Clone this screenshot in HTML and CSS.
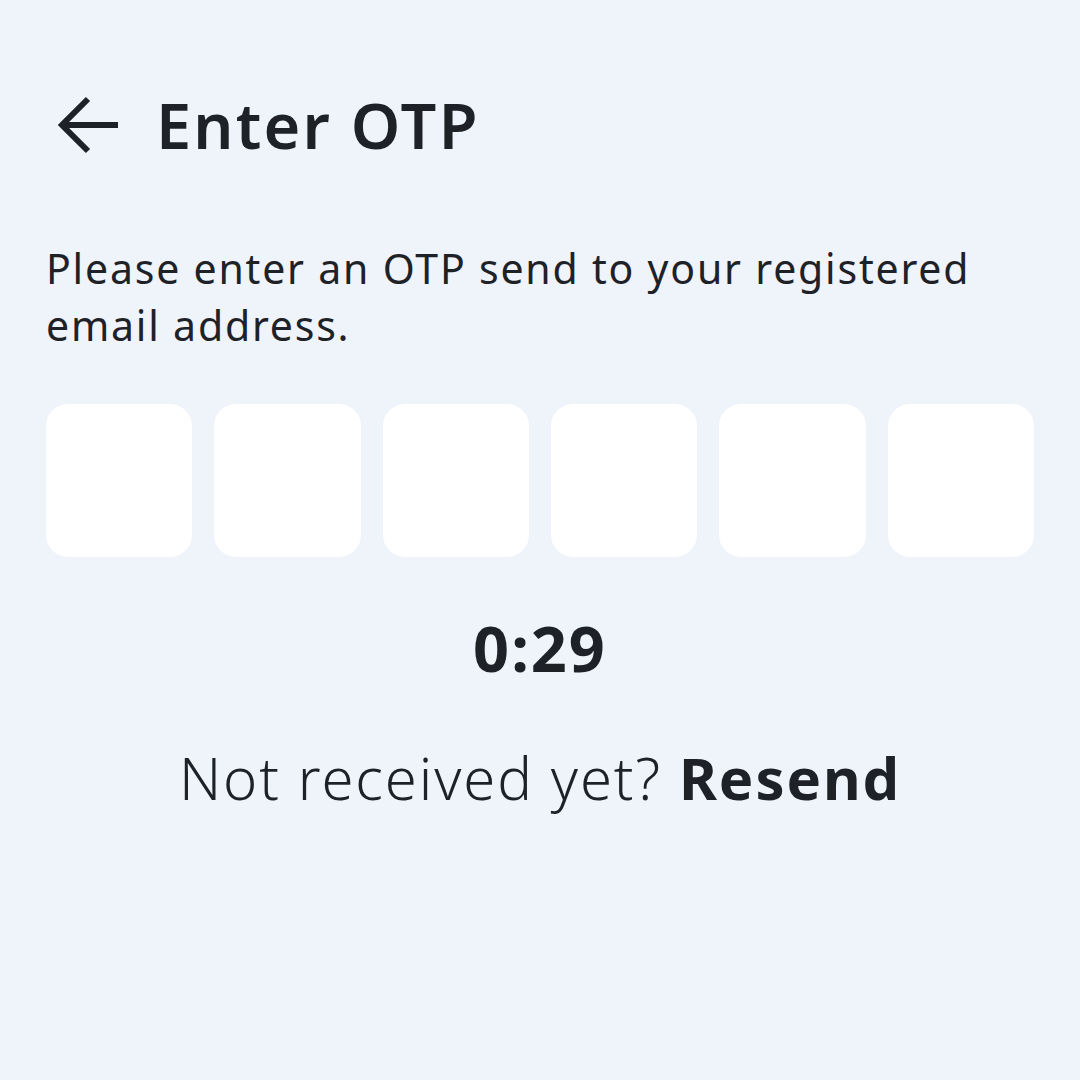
FILE: index.html
```html
<!DOCTYPE html>
<html lang="en">
<head>
<meta charset="utf-8">
<title>Enter OTP</title>
<link rel="stylesheet" href="styles.css">
</head>
<body>
<div class="page">
  <header class="header">
    <svg class="back" width="60" height="60" viewBox="0 0 60 60" aria-hidden="true">
      <path d="M60 30H6 M30 4 L4 30 L30 56" fill="none" stroke="#1e2227" stroke-width="6" stroke-linejoin="miter" stroke-miterlimit="10"/>
    </svg>
    <h1 class="title">Enter OTP</h1>
  </header>
  <p class="desc">Please enter an OTP send to your registered email address.</p>
  <div class="otp">
    <div class="cell"></div>
    <div class="cell"></div>
    <div class="cell"></div>
    <div class="cell"></div>
    <div class="cell"></div>
    <div class="cell"></div>
  </div>
  <div class="timer">0:29</div>
  <p class="resend">Not received yet? <strong>Resend</strong></p>
</div>
</body>
</html>
```
FILE: styles.css
```css
html, body {
  margin: 0;
  padding: 0;
  background: #eff3fa;
}
body {
  width: 1080px;
  height: 1080px;
  font-family: "Noto Sans", "Open Sans", sans-serif;
  color: #1e2227;
}
.page {
  padding: 0 46px;
}
.header {
  display: flex;
  align-items: center;
  height: 80px;
  padding-top: 85px;
}
.back {
  margin-left: 12px;
  flex: none;
}
.title {
  margin: 0 0 0 38px;
  font-size: 63px;
  font-weight: 600;
  letter-spacing: 2.2px;
  line-height: 80px;
}
.desc {
  margin: 75px 0 0;
  font-size: 41px;
  line-height: 57px;
  letter-spacing: 1.8px;
  font-weight: 400;
}
.otp {
  margin-top: 50px;
  display: flex;
  gap: 22px;
}
.cell {
  flex: 1;
  height: 153px;
  background: #ffffff;
  border-radius: 22px;
}
.timer {
  margin-top: 51px;
  text-align: center;
  font-size: 63px;
  font-weight: 700;
  line-height: 80px;
  letter-spacing: 2px;
}
.resend {
  margin: 50px 0 0;
  text-align: center;
  font-size: 58px;
  font-weight: 300;
  line-height: 80px;
  letter-spacing: 1.9px;
}
.resend strong {
  font-weight: 700;
}
```
